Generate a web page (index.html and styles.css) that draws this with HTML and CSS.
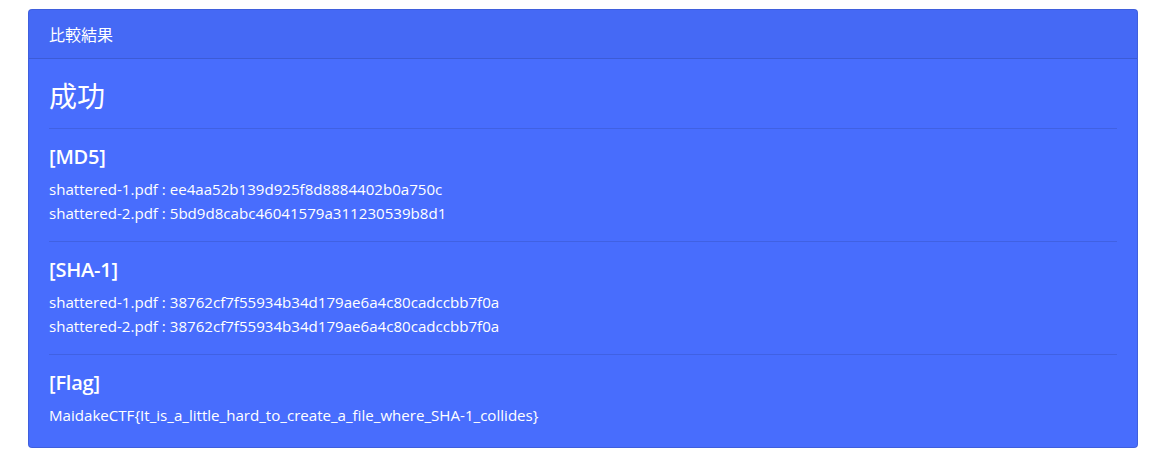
FILE: index.html
```html
<!DOCTYPE html>
<html lang="ja">
<head>
<meta charset="utf-8">
<title>比較結果</title>
<link rel="stylesheet" href="styles.css">
</head>
<body>
<div class="page">
  <div class="card">
    <div class="card-header">比較結果</div>
    <div class="card-body">
      <h3 class="title">成功</h3>
      <hr class="divider">
      <h5 class="section-title">[MD5]</h5>
      <p class="card-text">shattered-1.pdf : ee4aa52b139d925f8d8884402b0a750c<br>shattered-2.pdf : 5bd9d8cabc46041579a311230539b8d1</p>
      <hr class="divider">
      <h5 class="section-title">[SHA-1]</h5>
      <p class="card-text">shattered-1.pdf : 38762cf7f55934b34d179ae6a4c80cadccbb7f0a<br>shattered-2.pdf : 38762cf7f55934b34d179ae6a4c80cadccbb7f0a</p>
      <hr class="divider">
      <h5 class="section-title">[Flag]</h5>
      <p class="card-text last">MaidakeCTF{It_is_a_little_hard_to_create_a_file_where_SHA-1_collides}</p>
    </div>
  </div>
</div>
</body>
</html>
```

FILE: styles.css
```css
html, body {
  margin: 0;
  padding: 0;
  background: #ffffff;
}

body {
  font-family: "Segoe UI", "Open Sans", "Noto Sans CJK JP", sans-serif;
  font-size: 16px;
  line-height: 1.5;
  color: #ffffff;
}

.page {
  padding: 9px 37px 0 28px;
}

.card {
  background: #486dfd;
  border: 1px solid rgba(0, 0, 0, 0.125);
  border-radius: 4px;
  overflow: hidden;
}

.card-header {
  padding: 12px 20px;
  background: rgba(0, 0, 0, 0.03);
  border-bottom: 1px solid rgba(0, 0, 0, 0.125);
  font-family: "Noto Sans CJK JP", sans-serif;
  line-height: 24px;
}

.card-body {
  padding: 20px;
}

.title {
  margin: 0 0 8px;
  font-family: "Noto Sans CJK JP", sans-serif;
  font-size: 28px;
  font-weight: 400;
  line-height: 33px;
}

.divider {
  margin: 16px 0;
  border: 0;
  border-top: 1px solid rgba(0, 0, 0, 0.1);
}

.section-title {
  margin: 0 0 8px;
  font-size: 20px;
  font-weight: 600;
  line-height: 24px;
  letter-spacing: -0.2px;
}

.card-text {
  margin: 0 0 16px;
  font-size: 15.1px;
  line-height: 24px;
}

.card-text.last {
  margin-bottom: 0;
}
```
